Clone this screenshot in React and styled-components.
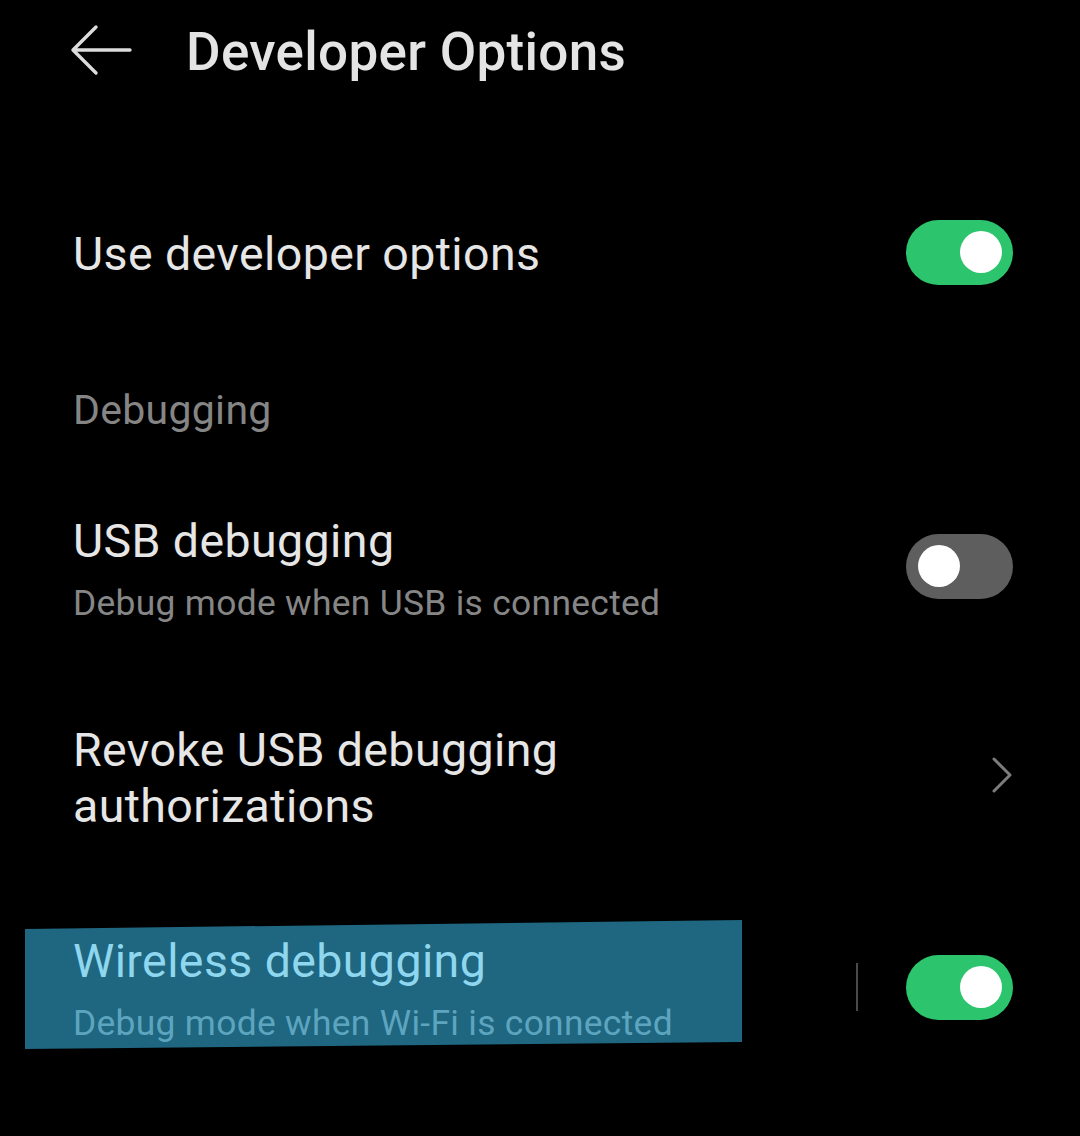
import styled, { createGlobalStyle } from "styled-components";

const GlobalStyle = createGlobalStyle`
	html, body {
		margin: 0;
		padding: 0;
		background: #000;
	}
	body {
		font-family: Roboto, "Noto Sans", sans-serif;
		-webkit-font-smoothing: antialiased;
	}
`;

function App() {
	return (
		<Page>
			<GlobalStyle />
			<Header>
				<BackButton aria-label="Back">
					<svg width="64" height="54" viewBox="0 0 64 54" fill="none">
						<path
							d="M26 3 L3 26 L26 49 M3 26 L60 26"
							stroke="#dcdcdc"
							strokeWidth="3.4"
							strokeLinecap="round"
							strokeLinejoin="round"
						/>
					</svg>
				</BackButton>
				<Title>Developer Options</Title>
			</Header>

			<Row $top={100} $height={108}>
				<TextBlock>
					<ItemTitle>Use developer options</ItemTitle>
				</TextBlock>
				<Toggle $on $nudge={4} />
			</Row>

			<SectionLabel>Debugging</SectionLabel>

			<Row $top={60} $height={124}>
				<TextBlock>
					<ItemTitle>USB debugging</ItemTitle>
					<ItemSub>Debug mode when USB is connected</ItemSub>
				</TextBlock>
				<Toggle $nudge={12} />
			</Row>

			<Row $top={82} $height={124}>
				<TextBlock>
					<ItemTitle $lh={56}>Revoke USB debugging</ItemTitle>
					<ItemTitle $lh={56}>authorizations</ItemTitle>
				</TextBlock>
				<Chevron>
					<svg width="24" height="40" viewBox="0 0 24 40" fill="none">
						<path
							d="M4 4 L20 20 L4 36"
							stroke="#7c7c7c"
							strokeWidth="3"
							strokeLinecap="round"
							strokeLinejoin="round"
						/>
					</svg>
				</Chevron>
			</Row>

			<Row $top={84} $height={126}>
				<Highlight>
					<ItemTitle $color="#8fd6ef">Wireless debugging</ItemTitle>
					<ItemSub $color="#5da5bf">Debug mode when Wi-Fi is connected</ItemSub>
				</Highlight>
				<Trailing>
					<Divider />
					<Toggle $on />
				</Trailing>
			</Row>
		</Page>
	);
}

export default App;

const Page = styled.div`
	width: 1080px;
	height: 1136px;
	background: #000;
	overflow: hidden;
	box-sizing: border-box;
	padding: 0 67px 0 73px;
	display: flex;
	flex-direction: column;
`;

const Header = styled.header`
	height: 100px;
	display: flex;
	align-items: center;
	margin-left: -3px;
`;

const BackButton = styled.button`
	width: 64px;
	height: 54px;
	padding: 0;
	margin: 2px 52px 0 0;
	border: none;
	background: none;
	display: flex;
	align-items: center;
`;

const Title = styled.h1`
	margin: 4px 0 0;
	font-family: Roboto, sans-serif;
	font-weight: 500;
	font-size: 53px;
	letter-spacing: 0.3px;
	color: #e4e4e4;
`;

const Row = styled.div`
	margin-top: ${(p) => p.$top}px;
	height: ${(p) => p.$height}px;
	display: flex;
	align-items: center;
	justify-content: space-between;
`;

const TextBlock = styled.div`
	display: flex;
	flex-direction: column;
`;

const ItemTitle = styled.div`
	font-family: Roboto, sans-serif;
	font-size: 46.5px;
	line-height: ${(p) => p.$lh || 62}px;
	letter-spacing: 0.4px;
	color: ${(p) => p.$color || "#e6e6e6"};
	white-space: nowrap;
`;

const ItemSub = styled.div`
	font-family: Roboto, sans-serif;
	font-size: 35.4px;
	line-height: 62px;
	letter-spacing: 0.3px;
	color: ${(p) => p.$color || "#868686"};
	white-space: nowrap;
`;

const SectionLabel = styled.div`
	margin-top: 62px;
	height: 80px;
	display: flex;
	align-items: center;
	font-family: Roboto, sans-serif;
	font-size: 41px;
	letter-spacing: 0.3px;
	color: #858585;
`;

const Toggle = styled.div`
	position: relative;
	flex: none;
	width: 107px;
	height: 65px;
	border-radius: 33px;
	margin-bottom: ${(p) => p.$nudge || 0}px;
	background: ${(p) => (p.$on ? "#2cc46c" : "#5e5e5e")};

	&::after {
		content: "";
		position: absolute;
		top: 11px;
		left: ${(p) => (p.$on ? "54px" : "12px")};
		width: 42px;
		height: 42px;
		border-radius: 50%;
		background: #fff;
	}
`;

const Chevron = styled.div`
	width: 24px;
	height: 40px;
	margin: 0 -1px 6px 0;
	display: flex;
`;

const Highlight = styled.div`
	display: flex;
	flex-direction: column;
	margin-left: -48px;
	padding: 10px 20px 0 48px;
	width: 717px;
	height: 134px;
	box-sizing: border-box;
	background: #1f6680;
	clip-path: polygon(0 9px, 100% 0, 100% 122px, 0 129px);
`;

const Trailing = styled.div`
	display: flex;
	align-items: center;
	gap: 48px;
`;

const Divider = styled.div`
	width: 2px;
	height: 48px;
	background: #4a4a4a;
`;
